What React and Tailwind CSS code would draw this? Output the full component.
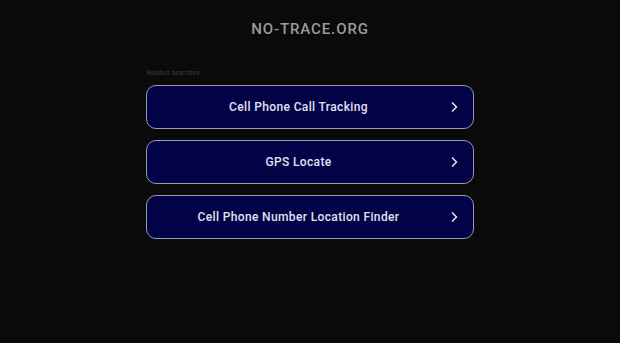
export default function App() {
  const links = [
    "Cell Phone Call Tracking",
    "GPS Locate",
    "Cell Phone Number Location Finder",
  ];

  return (
    <main
      className="min-h-[343px] bg-[#0a0a0a] flex flex-col items-center"
      style={{ fontFamily: "Roboto, 'Liberation Sans', sans-serif" }}
    >
      <h1 className="mt-[19px] text-[15px] leading-[20px] font-medium tracking-[0.06em] text-[#9a9a9a]">
        NO-TRACE.ORG
      </h1>

      <div className="mt-[29px] w-[328px]">
        <p className="text-[7px] leading-[10px] text-[#3a3a3a]">Related searches</p>

        <div className="mt-[7px] flex flex-col gap-[11px]">
          {links.map((label) => (
            <a
              key={label}
              href="#"
              className="relative flex h-[44px] items-center justify-center rounded-[10px] border border-[#9a9ab0] bg-[#020347] pl-[10px] pr-[33px] text-[12px] font-medium tracking-[0.03em] text-[#e0e0f0]"
            >
              {label}
              <svg
                className="absolute right-[15px] top-1/2 -translate-y-1/2"
                width="8"
                height="12"
                viewBox="0 0 8 12"
                fill="none"
                stroke="#e6e6f0"
                strokeWidth="1.5"
              >
                <path d="M2 1.5 L6.5 6 L2 10.5" />
              </svg>
            </a>
          ))}
        </div>
      </div>
    </main>
  );
}
